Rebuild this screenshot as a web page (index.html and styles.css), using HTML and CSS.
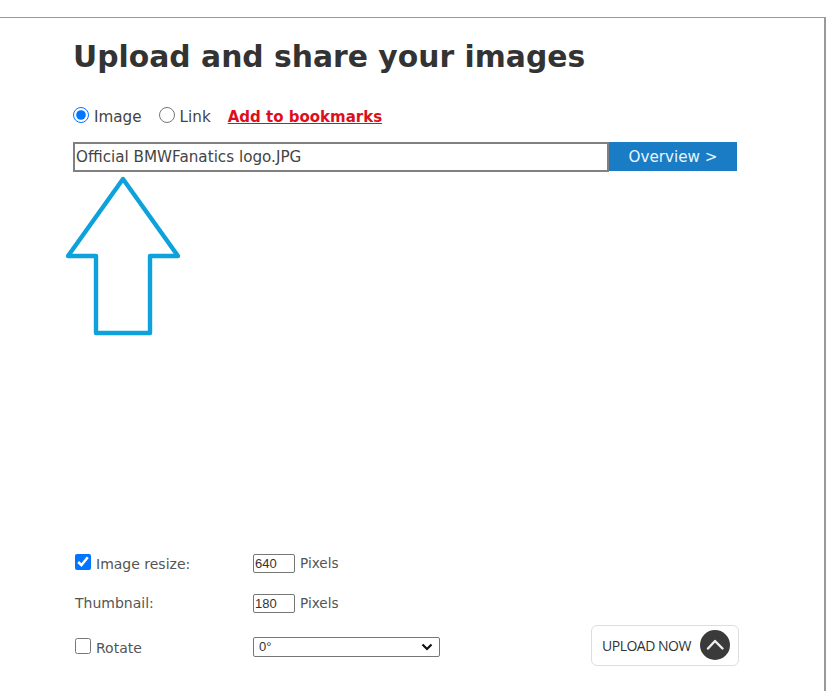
FILE: index.html
```html
<!DOCTYPE html>
<html lang="en">
<head>
  <meta charset="UTF-8">
  <title>Upload and share your images</title>
  <link rel="stylesheet" href="styles.css">
</head>
<body>
  <div class="frame">
    <h1>Upload and share your images</h1>
    <div class="source-row">
      <label class="opt"><input type="radio" name="source" checked> Image</label>
      <label class="opt"><input type="radio" name="source"> Link</label>
      <a class="bookmark" href="#">Add to bookmarks</a>
    </div>
    <div class="file-row">
      <input class="file-name" type="text" value="Official BMWFanatics logo.JPG">
      <button class="overview-btn">Overview &gt;</button>
    </div>
    <!-- arrow drawn over the page -->
    <svg class="arrow" width="116" height="160" viewBox="0 0 116 160">
      <path d="M57 3 L2 80 H30 V157 H84 V80 H112 Z" fill="none" stroke="#0ea2dc" stroke-width="4.4" stroke-linejoin="round"/>
    </svg>
    <div class="options">
      <div class="opt-row">
        <label class="opt-label check"><input type="checkbox" checked> Image resize:</label>
        <div class="opt-value"><input class="num" type="text" value="640"> Pixels</div>
      </div>
      <div class="opt-row">
        <label class="opt-label">Thumbnail:</label>
        <div class="opt-value"><input class="num" type="text" value="180"> Pixels</div>
      </div>
      <div class="opt-row last">
        <label class="opt-label check"><input type="checkbox"> Rotate</label>
        <select class="rotate"><option>0°</option><option>90°</option><option>180°</option></select>
        <button class="upload-btn">
          <span class="upload-text">UPLOAD NOW</span>
          <span class="upload-icon">
            <svg width="30" height="30" viewBox="0 0 30 30"><path d="M8 18.5 L15 11 L22.5 18.5" fill="none" stroke="#eee" stroke-width="2.4" stroke-linecap="round" stroke-linejoin="round"/></svg>
          </span>
        </button>
      </div>
    </div>
  </div>
</body>
</html>
```
FILE: styles.css
```css
* { box-sizing: border-box; }
html, body { margin: 0; padding: 0; }
body { height: 691px; overflow: hidden; background: #fff; color: #444; font-family: "DejaVu Sans", Verdana, sans-serif; font-size: 14px; }
.frame { position: relative; width: 826px; height: 674px; margin-top: 17px; padding: 20px 0 0 73px; border-top: 1px solid #999; border-right: 2px solid #999; }
h1 { margin: 0; font-size: 29.8px; line-height: 38px; font-weight: bold; color: #333; }
.source-row { display: flex; align-items: center; height: 20px; margin-top: 31px; }
.opt { display: flex; align-items: center; gap: 5px; margin-right: 17px; font-size: 15.2px; }
.opt input { width: 16px; height: 16px; margin: 0 0 5px 0; }
.bookmark { color: #dc101c; font-weight: bold; font-size: 15px; }
.file-row { display: flex; width: 664px; height: 30px; margin-top: 15px; }
.file-name { flex: 1; min-width: 0; height: 30px; padding: 0 1px; border: 2px solid #808080; font: 15.2px "DejaVu Sans", Verdana, sans-serif; color: #444; outline: none; }
.overview-btn { width: 128px; height: 29px; border: none; background: #1a7cc4; color: #e8f6ff; font: 15.2px "DejaVu Sans", Verdana, sans-serif; }
.arrow { position: absolute; left: 66px; top: 158px; }
.options { margin-top: 380px; }
.opt-row { display: flex; align-items: center; height: 22px; margin-bottom: 18px; color: #555; }
.opt-row.last { height: 42px; margin-top: -6px; margin-bottom: 0; }
.opt-label { display: flex; align-items: center; gap: 5px; width: 180px; padding-left: 2px; font-size: 14px; }
.opt-label.check { padding-top: 2px; }
.opt-label input { width: 16px; height: 16px; margin: 0 0 5px 0; }
.opt-value { display: flex; align-items: center; gap: 5px; font-size: 13.6px; }
.num { width: 42px; height: 19px; padding: 0 1px; border: 1px solid #767676; border-radius: 2px; font: 13px "Liberation Sans", Arial, sans-serif; color: #333; }
.rotate { appearance: none; width: 187px; height: 20px; padding: 0 0 2px 5px; border: 1px solid #767676; border-radius: 2px; font: 13px "Liberation Sans", Arial, sans-serif; color: #333; background: #fff url("data:image/svg+xml,%3Csvg xmlns='http://www.w3.org/2000/svg' width='12' height='8'%3E%3Cpath d='M1.5 1.5 L6 6 L10.5 1.5' fill='none' stroke='%23111' stroke-width='2.2'/%3E%3C/svg%3E") no-repeat right 6px center; }
.upload-btn { display: flex; align-items: center; justify-content: space-between; width: 148px; height: 41px; margin: 0 0 4px 151px; padding: 0 8px 0 10px; background: #fff; border: 1px solid #ddd; border-radius: 6px; }
.upload-text { font: 14px "Open Sans", sans-serif; letter-spacing: -0.5px; color: #333; }
.upload-icon { display: flex; width: 30px; height: 30px; background: #3a3a3a; border-radius: 50%; }
```
